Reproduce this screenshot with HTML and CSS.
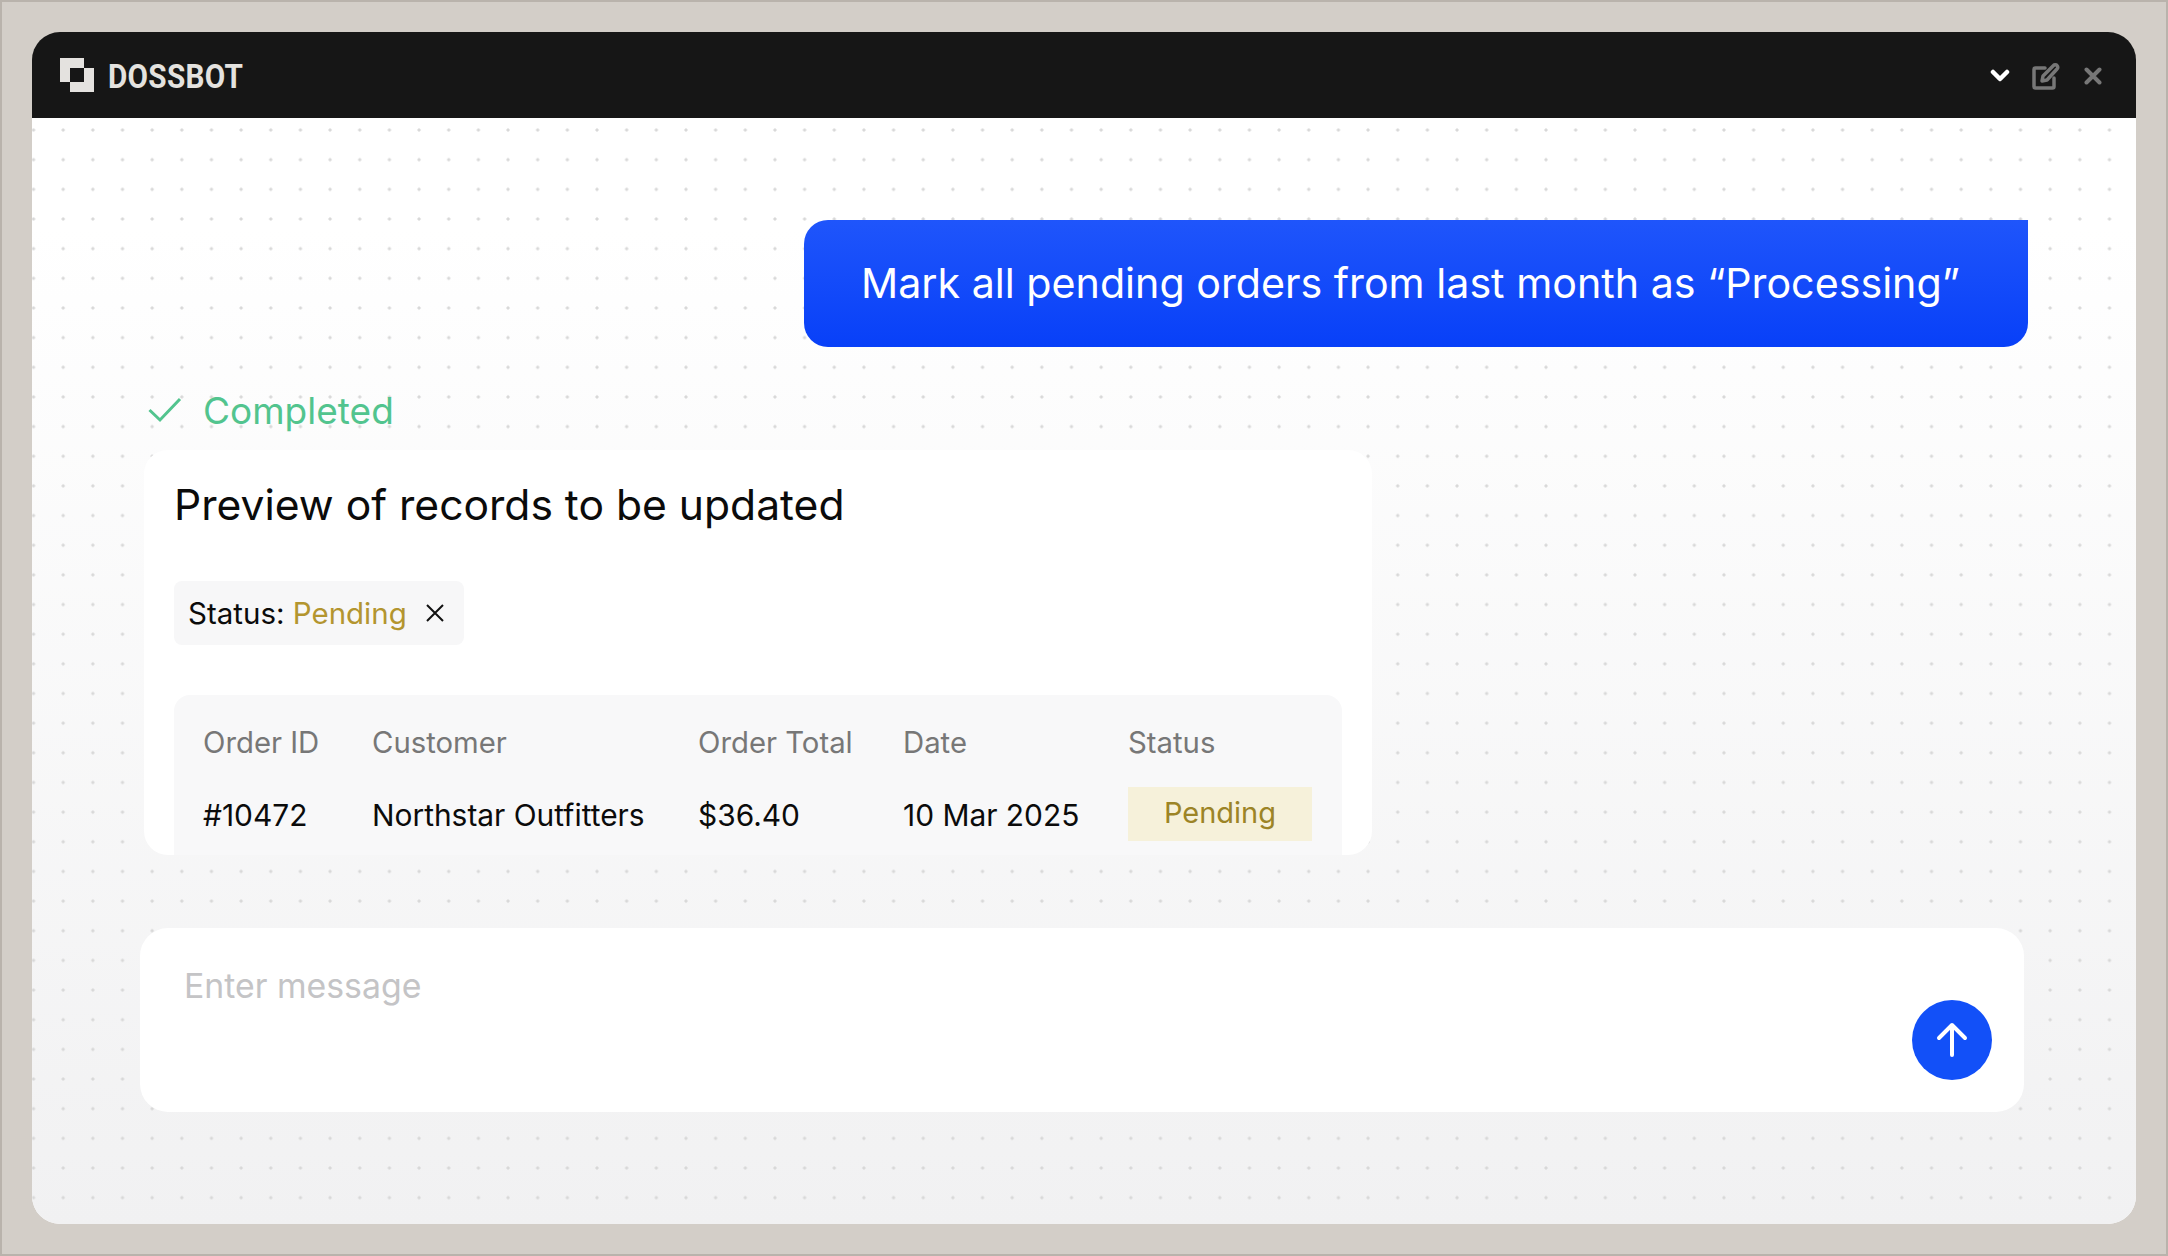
FILE: index.html
```html
<!DOCTYPE html>
<html lang="en">
<head>
  <meta charset="UTF-8" />
  <title>Dossbot</title>
  <link rel="stylesheet" href="styles.css">
</head>
<body>
  <div class="window">
    <header class="topbar">
      <div class="brand">
        <svg class="logo" width="34" height="34" viewBox="0 0 34 34">
          <path fill="#e4e2df" d="M0 0h24v10H10v14H0z"/>
          <path fill="#e4e2df" d="M24 10h10v24H10V24h14z"/>
        </svg>
        <span class="brand-name">DOSSBOT</span>
      </div>
      <div class="actions">
        <svg width="20" height="14" viewBox="0 0 20 14"><path d="M3 3l7 7 7-7" fill="none" stroke="#fff" stroke-width="4.500" stroke-linecap="round" stroke-linejoin="round"/></svg>
        <svg class="edit-icon" width="28" height="28" viewBox="0 0 28 28"><path d="M13 6H3.500a1.500 1.500 0 0 0-1.500 1.500v17a1.500 1.500 0 0 0 1.500 1.500h17a1.500 1.500 0 0 0 1.500-1.500V16" fill="none" stroke="#777" stroke-width="3.500" stroke-linecap="round"/><path d="M10 19l1-5L21.500 3.500a2.300 2.300 0 0 1 3.500 0 2.300 2.300 0 0 1 0 3.500L15 18z" fill="none" stroke="#777" stroke-width="3.500" stroke-linejoin="round"/></svg>
        <svg width="18" height="18" viewBox="0 0 18 18"><path d="M2.500 2.500l13 13M15.500 2.500l-13 13" fill="none" stroke="#777" stroke-width="4" stroke-linecap="round"/></svg>
      </div>
    </header>

    <main class="chat">
      <div class="bubble">Mark all pending orders from last month as “Processing”</div>

      <div class="done">
        <svg width="34" height="26" viewBox="0 0 34 26"><path d="M1.500 13l10.500 10L32 2" fill="none" stroke="#52c48e" stroke-width="3"/></svg>
        <span>Completed</span>
      </div>

      <section class="card">
        <h2>Preview of records to be updated</h2>
        <div class="chip">
          <span>Status: <em>Pending</em></span>
          <svg width="20" height="20" viewBox="0 0 20 20"><path d="M2 2l16 16M18 2L2 18" fill="none" stroke="#111" stroke-width="2"/></svg>
        </div>
        <div class="table-box">
          <table>
            <thead>
              <tr>
                <th class="col-id">Order ID</th>
                <th class="col-customer">Customer</th>
                <th class="col-total">Order Total</th>
                <th class="col-date">Date</th>
                <th>Status</th>
              </tr>
            </thead>
            <tbody>
              <tr>
                <td>#10472</td>
                <td>Northstar Outfitters</td>
                <td>$36.40</td>
                <td>10 Mar 2025</td>
                <td class="status-cell"><span class="badge">Pending</span></td>
              </tr>
            </tbody>
          </table>
        </div>
      </section>

      <div class="composer">
        <div class="placeholder">Enter message</div>
        <button class="send" type="button">
          <svg width="32" height="36" viewBox="0 0 32 36"><path d="M16 33V3M3 16L16 3l13 13" fill="none" stroke="#fff" stroke-width="4" stroke-linecap="round" stroke-linejoin="round"/></svg>
        </button>
      </div>
    </main>
  </div>
</body>
</html>
```

FILE: styles.css
```css
html, body {
  height: 100%;
}
body {
  margin: 0;
  box-sizing: border-box;
  padding: 30px;
  border: 2px solid #b9b3ac;
  background-color: #d3cec8;
  font-family: 'Inter', sans-serif;
  color: #0b0b0b;
}
.window {
  height: 100%;
  display: flex;
  flex-direction: column;
  border-radius: 28px;
  overflow: hidden;
}
.topbar {
  flex: 0 0 86px;
  box-sizing: border-box;
  display: flex;
  align-items: center;
  justify-content: space-between;
  padding: 2px 34px 0 28px;
  background-color: #161616;
}
.brand {
  display: flex;
  align-items: center;
  gap: 14px;
}
.logo {
  margin-top: -3px;
}
.brand-name {
  font-family: 'Roboto', sans-serif;
  font-weight: 700;
  font-size: 33px;
  letter-spacing: 0.3px;
  color: #e4e2df;
  transform: scaleX(0.9);
  transform-origin: left center;
}
.actions {
  display: flex;
  align-items: center;
  gap: 22px;
}
.edit-icon {
  margin-right: 2px;
}
.chat {
  flex: 1;
  padding: 102px 108px 0 108px;
  background-color: #fff;
  background-image:
    radial-gradient(circle, #d8d8d8 1.2px, transparent 2px),
    linear-gradient(#fff 10%, #f1f1f2);
  background-size: 29.67px 29.67px, 100% 100%;
  background-position: -13.3px -2.8px, 0 0;
}
.bubble {
  box-sizing: border-box;
  width: 1224px;
  height: 127px;
  margin-left: auto;
  display: flex;
  align-items: center;
  padding: 0 0 2px 57px;
  border-radius: 24px 0 24px 24px;
  background: linear-gradient(#1f55fb, #0840f8);
  color: #fff;
  font-size: 41.2px;
}
.done {
  display: flex;
  align-items: center;
  gap: 21px;
  height: 50px;
  margin: 38px 0 15px 8px;
  color: #52c48e;
  font-size: 37px;
}
.card {
  box-sizing: border-box;
  width: 1228px;
  height: 405px;
  margin-left: 4px;
  padding: 30px 30px 0;
  overflow: hidden;
  border-radius: 24px;
  background-color: #fff;
}
.card h2 {
  margin: 0;
  font-size: 42.6px;
  font-weight: 400;
  line-height: 50px;
}
.chip {
  display: inline-flex;
  align-items: center;
  gap: 18px;
  height: 64px;
  margin-top: 51px;
  padding: 0 19px 0 14px;
  border-radius: 8px;
  background-color: #f7f7f8;
  font-size: 29.5px;
}
.chip em {
  font-style: normal;
  color: #b3952f;
}
.table-box {
  margin-top: 50px;
  height: 200px;
  padding: 23px 29px 0;
  border-radius: 16px;
  background-color: #f8f8f9;
}
table {
  border-collapse: collapse;
  font-size: 29.9px;
}
th {
  padding: 0;
  height: 48px;
  font-size: 29.3px;
  font-weight: 400;
  text-align: left;
  color: #777;
}
td {
  padding: 22px 0 0;
}
td.status-cell {
  padding-top: 21px;
}
.col-id { width: 169px; }
.col-customer { width: 326px; }
.col-total { width: 205px; }
.col-date { width: 225px; }
.badge {
  box-sizing: border-box;
  display: inline-block;
  width: 184px;
  height: 54px;
  line-height: 52px;
  text-align: center;
  font-size: 29px;
  background-color: #f6f1da;
  color: #9c8426;
}
.composer {
  box-sizing: border-box;
  width: 1884px;
  height: 184px;
  margin-top: 73px;
  padding: 37px 32px 32px 44px;
  display: flex;
  justify-content: space-between;
  border-radius: 28px;
  background-color: #fff;
}
.placeholder {
  font-size: 33.8px;
  color: #c4c4c6;
}
.send {
  flex: 0 0 80px;
  width: 80px;
  height: 80px;
  margin-top: 35px;
  padding: 0;
  display: flex;
  align-items: center;
  justify-content: center;
  border: none;
  border-radius: 50%;
  background-color: #1250f8;
}
```
